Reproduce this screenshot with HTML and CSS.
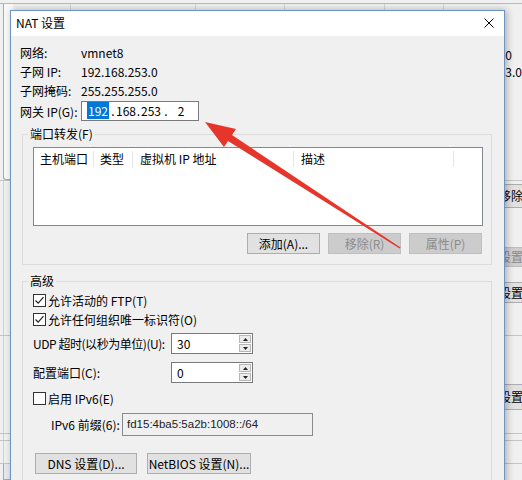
FILE: index.html
```html
<!DOCTYPE html>
<html>
<head>
<meta charset="utf-8">
<link rel="stylesheet" href="styles.css">
</head>
<body>
<div class="desktop">
  <div class="backwin">
    <div class="bw-topline"></div>
    <div class="bw-tick" style="left:70px"></div>
    <div class="bw-tick" style="left:195px"></div>
    <div class="bw-tick" style="left:284px"></div>
    <div class="bw-tick" style="left:384px"></div>
    <div class="bw-tick" style="left:443px"></div>
    <div class="bw-panel"></div>
    <div class="bw-vline"></div>
    <div class="bw-mini"></div>
    <div class="bw-text t1">192.168.253.0</div>
    <div class="bw-text t2">192.168.253.0</div>
    <div class="bw-hline" style="top:180px"></div>
    <div class="bw-btn b1">移除</div>
    <div class="bw-btn b2 dis">设置</div>
    <div class="bw-btn b3">设置</div>
    <div class="bw-hline" style="top:335px"></div>
    <div class="bw-btn b4">设置</div>
    <div class="bw-hline" style="top:433px"></div>
    <div class="bw-hline" style="top:440px"></div>
    <div class="bw-hline" style="top:463px"></div>
  </div>

  <div class="dialog">
    <div class="titlebar">
      <span class="title">NAT 设置</span>
      <svg class="close" width="10" height="10" viewBox="0 0 10 10"><path d="M0.5 0.5 L9.5 9.5 M9.5 0.5 L0.5 9.5" stroke="#000" stroke-width="1" fill="none"/></svg>
    </div>
    <div class="body">
      <div class="info">
        <div class="row"><span class="lbl">网络:</span><span>vmnet8</span></div>
        <div class="row"><span class="lbl">子网 IP:</span><span>192.168.253.0</span></div>
        <div class="row"><span class="lbl">子网掩码:</span><span>255.255.255.0</span></div>
        <div class="row gw">
          <span class="lbl">网关 IP(G):</span>
          <div class="ipbox">
            <span class="f f1"><span class="sel">192</span></span><span class="d d1">.</span><span class="f f2">168</span><span class="d d2">.</span><span class="f f3">253</span><span class="d d3">.</span><span class="f f4">2</span>
          </div>
        </div>
      </div>

      <fieldset class="group g1">
        <legend>端口转发(F)</legend>
        <div class="list">
          <div class="lhead">
            <span class="col c1">主机端口</span>
            <span class="col c2">类型</span>
            <span class="col c3">虚拟机 IP 地址</span>
            <span class="col c4">描述</span>
          </div>
        </div>
        <div class="btnrow">
          <button class="btn">添加(A)...</button>
          <button class="btn" disabled>移除(R)</button>
          <button class="btn" disabled>属性(P)</button>
        </div>
      </fieldset>

      <fieldset class="group g2">
        <legend>高级</legend>
        <div class="cbrow">
          <span class="cb"><svg width="11" height="11" viewBox="0 0 11 11"><polyline points="1.5,5.5 4.2,8.2 9.5,2.2" stroke="#222" stroke-width="1.2" fill="none"/></svg></span>
          <span>允许活动的 FTP(T)</span>
        </div>
        <div class="cbrow">
          <span class="cb"><svg width="11" height="11" viewBox="0 0 11 11"><polyline points="1.5,5.5 4.2,8.2 9.5,2.2" stroke="#222" stroke-width="1.2" fill="none"/></svg></span>
          <span>允许任何组织唯一标识符(O)</span>
        </div>
        <div class="spinrow r1">
          <span class="slbl tight">UDP 超时(以秒为单位)(U):</span>
          <div class="spin">
            <span class="val">30</span>
            <span class="arrows">
              <span class="arr"><svg width="5" height="3" viewBox="0 0 5 3"><path d="M0 3 L2.5 0 L5 3Z" fill="#222"/></svg></span>
              <span class="arr"><svg width="5" height="3" viewBox="0 0 5 3"><path d="M0 0 L2.5 3 L5 0Z" fill="#222"/></svg></span>
            </span>
          </div>
        </div>
        <div class="spinrow r2">
          <span class="slbl">配置端口(C):</span>
          <div class="spin">
            <span class="val">0</span>
            <span class="arrows">
              <span class="arr"><svg width="5" height="3" viewBox="0 0 5 3"><path d="M0 3 L2.5 0 L5 3Z" fill="#222"/></svg></span>
              <span class="arr"><svg width="5" height="3" viewBox="0 0 5 3"><path d="M0 0 L2.5 3 L5 0Z" fill="#222"/></svg></span>
            </span>
          </div>
        </div>
        <div class="cbrow v6">
          <span class="cb"></span>
          <span>启用 IPv6(E)</span>
        </div>
        <div class="prefrow">
          <span class="plbl">IPv6 前缀(6):</span>
          <div class="ro">fd15:4ba5:5a2b:1008::/64</div>
        </div>
        <div class="dnsrow">
          <button class="btn dns">DNS 设置(D)...</button>
          <button class="btn nb">NetBIOS 设置(N)...</button>
        </div>
      </fieldset>
    </div>
  </div>

  <svg class="arrow" width="522" height="480" viewBox="0 0 522 480">
    <polygon points="205,122 236,129 232,135 400.5,247.6 399.6,248.6 228,141 224,147" fill="#e6362c"/>
  </svg>
</div>
</body>
</html>
```

FILE: styles.css
```css
* { box-sizing: border-box; }
html, body { margin: 0; padding: 0; }
body {
  width: 522px;
  height: 480px;
  overflow: hidden;
  font-family: "Noto Sans CJK SC", sans-serif;
  font-size: 12px;
  color: #000;
  background: #f0f0f0;
}
.desktop { position: relative; width: 522px; height: 480px; overflow: hidden; }

/* background window */
.backwin { position: absolute; left: 0; top: 0; width: 522px; height: 480px; background: #f0f0f0; }
.bw-topline { position: absolute; left: 0; right: 0; top: 3px; height: 1px; background: #b9b9b9; }
.bw-tick { position: absolute; top: 4px; width: 1px; height: 6px; background: #d4d4d4; }
.bw-panel { position: absolute; left: 3px; top: 4px; width: 10px; height: 176px; background: #f8f8f8; border-left: 1px solid #a9a9a9; border-bottom: 1px solid #a9a9a9; border-bottom-left-radius: 3px; }
.bw-vline { position: absolute; left: 3px; top: 180px; width: 1px; height: 300px; background: #cfcfcf; }
.bw-mini { position: absolute; left: 3px; top: 463px; width: 8px; height: 17px; border: 1px solid #a9a9a9; background: #e6e8ef; }
.bw-text { position: absolute; line-height: 16px; white-space: nowrap; }
.bw-text.t1 { right: 10px; top: 47px; }
.bw-text.t2 { right: 0; top: 64px; }
.bw-hline { position: absolute; left: 0; right: 0; height: 1px; background: #c4c4c4; }
.bw-btn { position: absolute; left: 496px; width: 60px; height: 24px; line-height: 22px; padding-left: 2px; background: #e1e1e1; border: 1px solid #adadad; white-space: nowrap; }
.bw-btn.b1 { top: 184px; }
.bw-btn.b2 { top: 247px; height: 20px; line-height: 18px; }
.bw-btn.b3 { top: 282px; height: 21px; line-height: 19px; }
.bw-btn.b4 { top: 384px; height: 26px; line-height: 24px; }
.bw-btn.dis { background: #cfcfcf; border-color: #bdbdbd; color: #8a8a8a; }

/* dialog */
.dialog {
  position: absolute;
  left: 10px;
  top: 10px;
  width: 495px;
  height: 495px;
  border: 1px solid #6e93c6;
  background: #f0f0f0;
  box-shadow: 2px 0 7px rgba(0, 0, 0, 0.28);
  display: flex;
  flex-direction: column;
  z-index: 1;
}
.titlebar {
  flex: none;
  height: 25px;
  background: #fff;
  display: flex;
  align-items: center;
  justify-content: space-between;
  padding: 0 10px 0 5px;
}
.title { line-height: 22px; margin-top: -2px; }
.close { display: block; margin-top: -2px; }

.body { padding: 7px 12px 0 11px; }

.info .row { display: flex; align-items: center; height: 19px; margin-left: -2px; line-height: 19px; }
.info .lbl { width: 61px; flex: none; }
.info .row.gw { height: 22px; }
.ipbox {
  width: 118px;
  height: 20px;
  border: 1px solid #7a7a7a;
  background: #fff;
  display: flex;
  align-items: center;
  padding-left: 4px;
  line-height: 16px;
}
.f, .d { display: inline-block; }
.f1 { width: 24px; text-align: center; }
.f2 { width: 20px; }
.f3 { width: 21px; }
.f4 { width: 22px; text-align: center; }
.d1 { width: 6px; text-align: center; }
.d2 { width: 5px; text-align: center; }
.d3 { width: 8px; text-align: center; }
.sel { background: #0078d7; color: #fff; padding: 0 1px; }

/* group boxes */
.group {
  margin: 4px 0 0 0;
  padding: 5px 8px 10px 10px;
  border: 1px solid #dcdcdc;
  min-width: 0;
}
.group legend {
  padding: 0 2px;
  margin-left: -5px;
  line-height: 16px;
}
.g2 { margin-top: 8px; padding-top: 2px; padding-bottom: 20px; }

.list { height: 79px; border: 1px solid #828790; background: #fff; }
.lhead { display: flex; padding-top: 3px; }
.col { height: 16px; line-height: 16px; padding-left: 6px; border-right: 1px solid #e5e5e5; white-space: nowrap; }
.c1 { width: 60px; }
.c2 { width: 39px; }
.c3 { width: 161px; padding-left: 7px; }
.c4 { width: 160px; padding-left: 7px; }

.btnrow { display: flex; justify-content: flex-end; gap: 8px; margin-top: 7px; padding-right: 1px; }
.btn {
  width: 73px;
  height: 21px;
  padding: 0;
  font-family: inherit;
  font-size: 12px;
  line-height: 19px;
  color: #000;
  background: #e1e1e1;
  border: 1px solid #adadad;
  border-radius: 0;
}
.btn:disabled { background: #cccccc; border-color: #bfbfbf; color: #8b8b8b; }

.cbrow { display: flex; align-items: center; height: 19px; line-height: 19px; }
.cb {
  width: 13px;
  height: 13px;
  border: 1px solid #333;
  background: #fff;
  margin-right: 2px;
  display: flex;
  align-items: center;
  justify-content: center;
  flex: none;
}
.cb svg { display: block; }

.spinrow { display: flex; align-items: center; height: 21px; }
.spinrow.r1 { margin-top: 4px; }
.spinrow.r2 { margin-top: 8px; }
.slbl { width: 138px; flex: none; white-space: nowrap; line-height: 19px; }
.slbl.tight { letter-spacing: -0.45px; }
.spin {
  width: 82px;
  height: 21px;
  border: 1px solid #7a7a7a;
  background: #fff;
  display: flex;
}
.spin .val { flex: 1; padding-left: 5px; line-height: 19px; }
.spin .arrows { width: 13px; display: flex; flex-direction: column; gap: 1px; padding: 1px 1px 1px 0; }
.arr {
  flex: 1;
  background: #ececec;
  border: 1px solid #b7b7b7;
  display: flex;
  align-items: center;
  justify-content: center;
}
.arr svg { display: block; }

.cbrow.v6 { margin-top: 6px; }
.prefrow { display: flex; align-items: center; margin-top: 5px; padding-left: 18px; }
.plbl { width: 71px; flex: none; white-space: nowrap; }
.ro {
  width: 191px;
  height: 23px;
  border: 1px solid #8a8a8a;
  background: #f0f0f0;
  padding-left: 4px;
  font-family: "Liberation Sans", sans-serif;
  font-size: 11.5px;
  line-height: 21px;
  color: #222;
  white-space: nowrap;
  overflow: hidden;
}
.dnsrow { display: flex; gap: 10px; margin-top: 17px; padding-left: 2px; }
.btn.dns { width: 102px; }
.btn.nb { width: 104px; }

.arrow { position: absolute; left: 0; top: 0; z-index: 2; pointer-events: none; }
```
